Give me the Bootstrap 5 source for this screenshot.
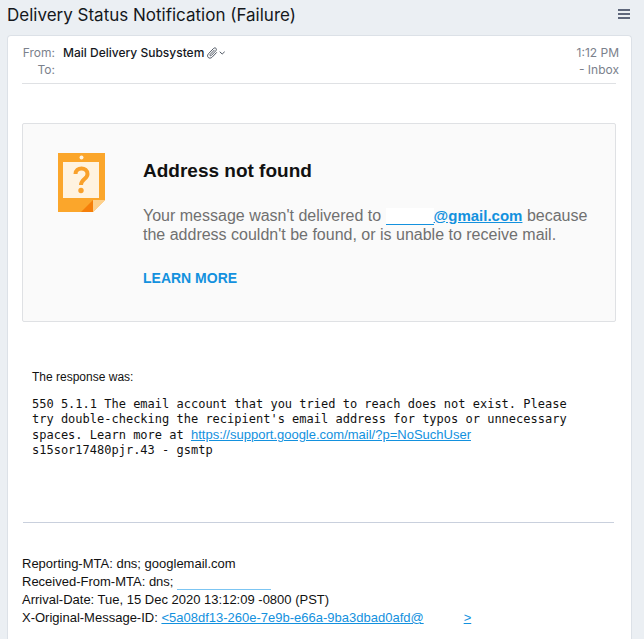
<!DOCTYPE html>
<html lang="en">
<head>
<meta charset="utf-8">
<meta name="viewport" content="width=device-width, initial-scale=1">
<title>Delivery Status Notification (Failure)</title>
<link href="https://cdn.jsdelivr.net/npm/bootstrap@5.3.0/dist/css/bootstrap.min.css" rel="stylesheet">
<style>
body { background: #ebeff3; color: #111; font-family: "Liberation Sans", Arial, sans-serif; font-size: 13px; line-height: 18px; }
a { color: #1391de; }
.ui-font { font-family: Inter, sans-serif; }
.topbar { padding: 4px 14px 8px 7px; }
.subject { font-size: 17px; line-height: 23px; color: #15181c; }
.menu-btn { color: #565f73; line-height: 0; }
.message { margin: 0 12px 0 7px; padding: 8px 15px 0 14px; border: 1px solid #dce1e7; border-bottom: 0; border-radius: 4px 4px 0 0; }
.meta { font-size: 12px; line-height: 17px; color: #7b818c; padding-bottom: 5px; border-bottom: 1px solid #dfe1e4; }
.meta dt { width: 33px; margin-right: 8px; text-align: right; font-weight: 400; }
.sender { color: #16191f; font-weight: 500; }
.clip { color: #4f5763; line-height: 0; margin-left: 2px; }
.stamp { margin-right: -3px; }
.notice { margin-top: 39px; padding: 28px 16px 33px 35px; background: #fafafa; border: 1px solid #dfe1e4; border-radius: 2px; gap: 37px; color: #707070; font-size: 16px; line-height: 19px; }
.notice h1 { font-size: 19px; line-height: 24px; margin: 7px 0 23px; color: #111; }
.notice p { margin-bottom: 24px; }
.notice p a { font-size: 15px; }
.redacted { display: inline-block; width: 48px; height: 17px; background: #fff; vertical-align: bottom; border-bottom: 1px solid #1391de; }
.learn { font-size: 14px; line-height: 20px; }
.response { padding: 46px 10px 0; }
.response p { font-size: 12px; margin-bottom: 11px; }
.response code { display: block; color: #111; font: 12px/15px "DejaVu Sans Mono", monospace; }
.response code a { font-family: "Liberation Sans", Arial, sans-serif; font-size: 13px; }
.rule { margin: 64px 2px 32px 1px; border-top: 1px solid #c9d0dd; opacity: 1; }
.hidden-host { display: inline-block; width: 94px; height: 14px; border-bottom: 1px solid #7cc5f2; vertical-align: bottom; margin-bottom: 1px; }
.hidden-domain { display: inline-block; width: 40px; }
</style>
</head>
<body class="min-vh-100 d-flex flex-column">
<header class="topbar ui-font d-flex justify-content-between align-items-start">
  <h2 class="subject m-0 fw-normal">Delivery Status Notification (Failure)</h2>
  <button type="button" class="menu-btn btn btn-link p-0 pt-1 border-0" aria-label="Menu">
    <svg width="12" height="12" viewBox="0 0 12 12"><path d="M0 2h12M0 6h12M0 10h12" stroke="#5e677b" stroke-width="2"/></svg>
  </button>
</header>
<main class="message bg-white flex-grow-1">
  <div class="meta ui-font d-flex justify-content-between">
    <dl class="m-0">
      <div class="d-flex"><dt>From:</dt><dd class="sender m-0 d-flex align-items-center">Mail Delivery Subsystem
        <button type="button" class="clip btn btn-link p-0 border-0" aria-label="Attachments">
          <svg width="20" height="12" viewBox="0 0 20 12" fill="none" stroke="#4f5763" stroke-linecap="round" stroke-linejoin="round"><path d="M8.2 3.2 4.2 7.4c-.8.9.3 1.9 1.1 1.1l4.4-4.6c1.9-2-.5-4.1-2.3-2.3L2.5 6.7c-2.7 3 1 6.1 3.7 3.4L10.500 5.600"/><path d="m14 5 2.200 2L18.400 5"/></svg>
        </button></dd></div>
      <div class="d-flex"><dt>To:</dt><dd class="m-0"></dd></div>
    </dl>
    <div class="stamp text-end">1:12 PM<br>- Inbox</div>
  </div>
  <section class="notice d-flex">
    <svg class="flex-shrink-0" width="48" height="61" viewBox="0 0 48 61" aria-hidden="true">
      <path d="M0 1h47v47L35 60H0z" fill="#fba62b"/>
      <path d="M5 10h36v36H5z" fill="#fff3e0"/>
      <circle cx="23.500" cy="5.500" r="2" fill="#fff3e0"/>
      <path d="M23 60 35 48v12z" fill="#f57f0a"/>
      <path d="M35 48h12L35 60z" fill="#fdd08c"/>
      <path d="M17.500 22c0-7.500 12-7.500 12 0 0 5-6.500 5.200-6.500 11" fill="none" stroke="#f9a12b" stroke-width="4"/>
      <circle cx="23" cy="38.500" r="2.700" fill="#f9a12b"/>
    </svg>
    <div>
      <h1 class="fw-bold">Address not found</h1>
      <p>Your message wasn't delivered to <a class="fw-bold" href="#"><span class="redacted"></span>@gmail.com</a> because the address couldn't be found, or is unable to receive mail.</p>
      <a class="learn fw-bold text-decoration-none" href="#">LEARN MORE</a>
    </div>
  </section>
  <section class="response">
    <p>The response was:</p>
    <code>550 5.1.1 The email account that you tried to reach does not exist. Please<br>try double-checking the recipient's email address for typos or unnecessary<br>spaces. Learn more at <a href="#">https://support.google.com/mail/?p=NoSuchUser</a><br>s15sor17480pjr.43 - gsmtp</code>
  </section>
  <hr class="rule">
  <section>
    Reporting-MTA: dns; googlemail.com<br>
    Received-From-MTA: dns; <a href="#" aria-label="Host"><span class="hidden-host"></span></a><br>
    Arrival-Date: Tue, 15 Dec 2020 13:12:09 -0800 (PST)<br>
    X-Original-Message-ID: <a href="#">&lt;5a08df13-260e-7e9b-e66a-9ba3dbad0afd@</a><span class="hidden-domain"></span><a href="#">&gt;</a>
  </section>
</main>
<script src="https://cdn.jsdelivr.net/npm/bootstrap@5.3.0/dist/js/bootstrap.bundle.min.js"></script>
</body>
</html>
